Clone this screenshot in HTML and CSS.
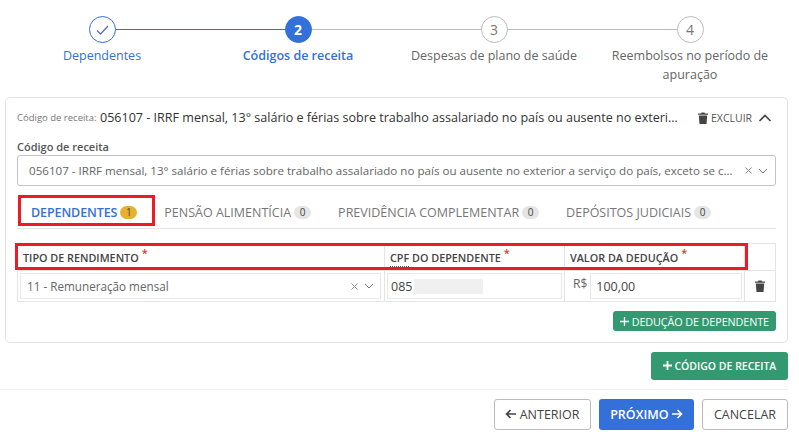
FILE: index.html
```html
<!DOCTYPE html>
<html lang="pt-BR">
  <head>
    <meta charset="UTF-8" />
    <title>Códigos de receita</title>
    <link rel="stylesheet" href="styles.css">
  </head>
  <body>
    <!-- Etapas -->
    <div class="stepper">
      <div class="step done">
        <div class="step-circle">
          <svg width="13" height="10" viewBox="0 0 13 10"><path d="M1 5.500 4.500 9 12 1" fill="none" stroke="#5b6fc0" stroke-width="1.300"/></svg>
        </div>
        <div class="step-label">Dependentes</div>
      </div>
      <div class="step active">
        <div class="step-circle">2</div>
        <div class="step-label">Códigos de receita</div>
      </div>
      <div class="step">
        <div class="step-circle">3</div>
        <div class="step-label">Despesas de plano de saúde</div>
      </div>
      <div class="step">
        <div class="step-circle">4</div>
        <div class="step-label">Reembolsos no período de apuração</div>
      </div>
    </div>

    <div class="card">
      <div class="card-header">
        <span class="card-caption">Código de receita:</span>
        <span class="card-title">056107 - IRRF mensal, 13° salário e férias sobre trabalho assalariado no país ou ausente no exterior a serviço do país</span>
        <span class="card-delete">
          <svg width="10" height="12" viewBox="0 0 10 12"><path d="M0 1.500h3L3.500 .5h3L7 1.500h3v1.300H0zM.8 3.500h8.400L8.500 12h-7z" fill="#444"/></svg>
          EXCLUIR
        </span>
        <svg class="card-toggle" width="14" height="8" viewBox="0 0 14 8"><path d="M1.500 7 7 1.500 12.500 7" fill="none" stroke="#444" stroke-width="1.600"/></svg>
      </div>

      <label class="field-label">Código de receita</label>
      <div class="select">
        <span class="select-value">056107 - IRRF mensal, 13° salário e férias sobre trabalho assalariado no país ou ausente no exterior a serviço do país, exceto se contratado localmente</span>
        <svg class="clear" width="7" height="7" viewBox="0 0 7 7"><path d="M.5 .5l6 6M6.500 .5l-6 6" stroke="#888" stroke-width="1"/></svg>
        <svg width="10" height="6" viewBox="0 0 10 6"><path d="M1 1l4 4 4-4" fill="none" stroke="#777" stroke-width="1"/></svg>
      </div>

      <div class="tabs">
        <div class="tab active">DEPENDENTES <span class="badge warn">1</span></div>
        <div class="tab">PENSÃO ALIMENTÍCIA <span class="badge">0</span></div>
        <div class="tab">PREVIDÊNCIA COMPLEMENTAR <span class="badge">0</span></div>
        <div class="tab">DEPÓSITOS JUDICIAIS <span class="badge">0</span></div>
        <div class="mark mark-tab"></div>
      </div>

      <div class="grid">
        <div class="cell head">TIPO DE RENDIMENTO <sup class="req">*</sup></div>
        <div class="cell head"><span class="hint">CPF</span>&nbsp;DO DEPENDENTE <sup class="req">*</sup></div>
        <div class="cell head">VALOR DA DEDUÇÃO <sup class="req">*</sup></div>
        <div class="cell head"></div>

        <div class="cell body first">
          <div class="input">
            <span class="input-text">11 - Remuneração mensal</span>
            <svg class="clear" width="7" height="7" viewBox="0 0 7 7"><path d="M.5 .5l6 6M6.500 .5l-6 6" stroke="#888" stroke-width="1"/></svg>
            <svg width="10" height="6" viewBox="0 0 10 6"><path d="M1 1l4 4 4-4" fill="none" stroke="#777" stroke-width="1"/></svg>
          </div>
        </div>
        <div class="cell body">
          <div class="input dark">085<span class="blur"></span></div>
        </div>
        <div class="cell body money">
          <span class="prefix">R$</span>
          <div class="input dark">100,00</div>
        </div>
        <div class="cell body center">
          <svg width="10" height="12" viewBox="0 0 10 12"><path d="M0 1.500h3L3.500 .5h3L7 1.500h3v1.300H0zM.8 3.500h8.400L8.500 12h-7z" fill="#444"/></svg>
        </div>
        <div class="mark mark-head"></div>
      </div>

      <div class="card-actions">
        <button class="btn green small">
          <svg width="9" height="9" viewBox="0 0 9 9"><path d="M4.500 0v9M0 4.500h9" stroke="#fff" stroke-width="1.300"/></svg>
          DEDUÇÃO DE DEPENDENTE
        </button>
      </div>
    </div>

    <div class="add-row">
      <button class="btn green large">
        <svg width="9" height="9" viewBox="0 0 9 9"><path d="M4.500 0v9M0 4.500h9" stroke="#fff" stroke-width="1.800"/></svg>
        CÓDIGO DE RECEITA
      </button>
    </div>

    <div class="footer">
      <button class="btn outline">
        <svg width="11" height="10" viewBox="0 0 11 10"><path d="M5.500 1 1.500 5l4 4M2 5h9" fill="none" stroke="#444" stroke-width="1.600"/></svg>
        ANTERIOR
      </button>
      <button class="btn primary">
        PRÓXIMO
        <svg width="11" height="10" viewBox="0 0 11 10"><path d="M5.500 1l4 4-4 4M9 5H0" fill="none" stroke="#fff" stroke-width="1.600"/></svg>
      </button>
      <button class="btn outline">CANCELAR</button>
    </div>
  </body>
</html>
```

FILE: styles.css
```css
body {
  font-family: "Open Sans", sans-serif;
  background-color: #fff;
  color: #444;
  margin: 0;
  padding: 0;
  overflow: hidden;
}

/* ----------- etapas ----------- */
.stepper {
  display: grid;
  grid-template-columns: repeat(4, 196px);
  padding: 16px 0 0 4px;
  height: 97px;
  box-sizing: border-box;
}
.step {
  position: relative;
  display: flex;
  flex-direction: column;
  align-items: center;
  color: #666;
}
.step::before {
  content: "";
  position: absolute;
  top: 13px;
  left: 50%;
  width: 100%;
  height: 1px;
  background: #bbb;
}
.step:last-child::before {
  display: none;
}
.step.done::before {
  background: #3370d9;
}
.step-circle {
  position: relative;
  width: 27px;
  height: 27px;
  box-sizing: border-box;
  border: 1px solid #bbb;
  border-radius: 50%;
  background: #fff;
  display: flex;
  align-items: center;
  justify-content: center;
  font-size: 14px;
  color: #777;
}
.step-label {
  margin-top: 2px;
  font-size: 12.500px;
  line-height: 19px;
  padding-top: 1px;
  text-align: center;
  width: 190px;
}
.step.done .step-circle {
  border-color: #3370d9;
}
.step.done .step-label {
  color: #3370d9;
}
.step.active .step-circle {
  background: #3370d9;
  border-color: #3370d9;
  color: #fff;
  font-weight: 700;
}
.step.active .step-label {
  color: #3370d9;
  font-weight: 600;
}

/* ----------- card ----------- */
.card {
  margin-left: 5px;
  width: 783px;
  height: 246px;
  box-sizing: border-box;
  border: 1px solid #e2e2e2;
  border-radius: 5px;
  padding: 0 11px;
}
.card-header {
  display: flex;
  align-items: center;
  height: 38px;
  padding-top: 1px;
  box-sizing: border-box;
}
.card-caption {
  width: 83px;
  font-size: 9.500px;
  color: #777;
  white-space: nowrap;
}
.card-title {
  width: 580px;
  font-size: 12.550px;
  color: #333;
  white-space: nowrap;
  overflow: hidden;
  text-overflow: ellipsis;
}
.card-delete {
  display: flex;
  align-items: center;
  gap: 3px;
  margin-left: 18px;
  font-size: 10.500px;
  color: #555;
  white-space: nowrap;
}
.card-toggle {
  margin-left: 6px;
}
.field-label {
  display: block;
  margin-top: 2px;
  font-size: 11px;
  line-height: 17px;
  font-weight: 600;
  color: #555;
}
.select {
  display: flex;
  align-items: center;
  height: 31px;
  box-sizing: border-box;
  border: 1px solid #c4c4c4;
  border-radius: 3px;
  padding: 0 7px 0 11px;
  font-size: 11.600px;
  color: #666;
}
.select-value {
  flex: 1;
  white-space: nowrap;
  overflow: hidden;
  text-overflow: ellipsis;
}
.clear {
  flex: none;
  margin: 0 6px;
}

/* ----------- onglets ----------- */
.tabs {
  position: relative;
  display: flex;
  height: 31px;
  margin-top: 11px;
  border-bottom: 1px solid #e4e4e4;
  font-size: 12.500px;
  color: #777;
}
.tab {
  display: flex;
  align-items: center;
  gap: 3px;
  padding: 0 14px 0 13px;
  white-space: nowrap;
}
.tab.active {
  color: #3370d9;
  font-weight: 600;
  letter-spacing: -.1px;
  padding-left: 14px;
}
.badge {
  display: inline-block;
  min-width: 17px;
  height: 13px;
  border-radius: 7px;
  background: #e5e5e5;
  color: #444;
  font-size: 10px;
  line-height: 13px;
  font-weight: 400;
  text-align: center;
}
.badge.warn {
  background: #e8b02f;
}
.mark {
  position: absolute;
  border: 3px solid #ed1c24;
  box-sizing: border-box;
  pointer-events: none;
}
.mark-tab {
  left: 1px;
  top: -2px;
  width: 137px;
  height: 31px;
}

/* ----------- tableau ----------- */
.grid {
  position: relative;
  display: grid;
  grid-template-columns: 367px 180px 180px 31px;
  grid-template-rows: 27px 31px;
  width: 759px;
  margin-top: 14px;
  border-top: 1px solid #e4e4e4;
  border-left: 1px solid #e4e4e4;
  box-sizing: border-box;
}
.cell {
  border-right: 1px solid #e4e4e4;
  border-bottom: 1px solid #e4e4e4;
  box-sizing: border-box;
  display: flex;
  align-items: center;
}
.cell.head {
  padding-left: 5px;
  font-size: 10.800px;
  font-weight: 600;
  color: #444;
  white-space: nowrap;
}
.cell.body {
  padding: 2px;
}
.cell.first {
  padding-right: 3px;
}
.cell.center {
  justify-content: center;
}
.cell.money {
  gap: 3px;
  padding-left: 8px;
}
.req {
  margin-left: 3px;
  color: #e0342c;
  font-size: 11px;
  line-height: 0;
  position: relative;
  top: -4px;
}
.hint {
  border-bottom: 1px dotted #555;
  padding-bottom: 1px;
  margin-bottom: -2px;
}
.input {
  flex: 1;
  display: flex;
  align-items: center;
  height: 26px;
  box-sizing: border-box;
  border: 1px solid #e8e8e8;
  padding: 0 6px;
  font-size: 11.700px;
  color: #666;
  min-width: 0;
}
.input.dark {
  color: #444;
  font-size: 12.500px;
  padding: 0 5px 0 3px;
}
.money .input.dark {
  padding-left: 5px;
}
.input-text {
  flex: 1;
}
.input .clear {
  margin: 0 6px 0 0;
}
.prefix {
  font-size: 12px;
  color: #666;
  margin-bottom: 6px;
}
.blur {
  display: inline-block;
  width: 69px;
  height: 15px;
  margin-left: 2px;
  background: #f0f0f0;
}
.mark-head {
  left: -3px;
  top: -1px;
  width: 733px;
  height: 27px;
}
.card-actions {
  display: flex;
  justify-content: flex-end;
  margin-top: 9px;
}

/* ----------- boutons ----------- */
.btn {
  font-family: "Open Sans", sans-serif;
  border-radius: 3px;
  box-sizing: border-box;
  white-space: nowrap;
  padding: 0;
  cursor: pointer;
}
.btn.green {
  background: #339970;
  border: none;
  color: #fff;
}
.btn.small {
  width: 163px;
  height: 20px;
  font-size: 10.800px;
  letter-spacing: -.1px;
}
.btn.large {
  width: 137px;
  height: 28px;
  font-size: 10.500px;
  font-weight: 600;
}
.add-row {
  display: flex;
  justify-content: flex-end;
  width: 788px;
  margin-top: 9px;
}
.footer {
  display: flex;
  justify-content: flex-end;
  gap: 8px;
  width: 788px;
  margin-top: 9px;
  padding-top: 9px;
  border-top: 1px solid #eee;
  box-sizing: border-box;
}
.btn.outline,
.btn.primary {
  height: 31px;
  font-size: 12.500px;
}
.btn.outline {
  background: #fff;
  border: 1px solid #bbb;
  color: #444;
  width: 97px;
}
.btn.outline:last-child {
  width: 86px;
}
.btn.primary {
  background: #3370d9;
  border: none;
  color: #fff;
  width: 95px;
  font-weight: 600;
}
```
